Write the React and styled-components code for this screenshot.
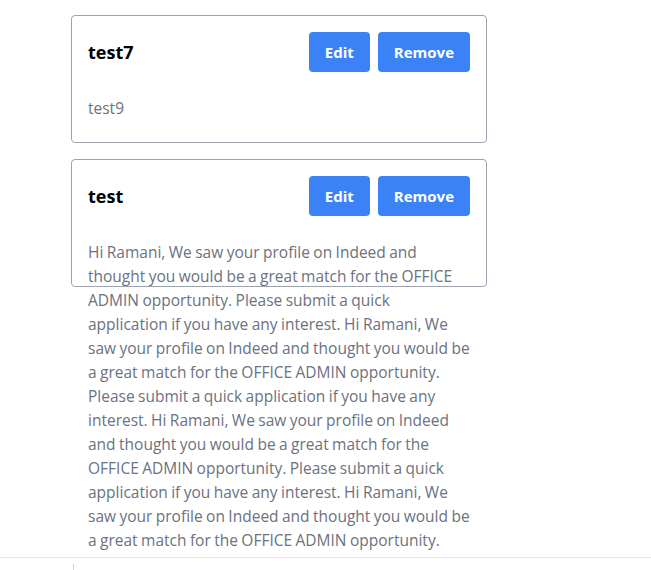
import React from 'react'
import styled, { createGlobalStyle } from 'styled-components'

const GlobalStyle = createGlobalStyle`
  html, body {
    margin: 0;
    padding: 0;
    background: #fff;
  }
  body {
    font-family: "Open Sans", "Noto Sans", sans-serif;
    height: 570px;
    overflow: hidden;
  }
  * { box-sizing: border-box; }
`

const notes = [
  { id: 1, title: 'test7', body: 'test9' },
  {
    id: 2,
    title: 'test',
    body: 'Hi Ramani, We saw your profile on Indeed and thought you would be a great match for the OFFICE ADMIN opportunity. Please submit a quick application if you have any interest. Hi Ramani, We saw your profile on Indeed and thought you would be a great match for the OFFICE ADMIN opportunity. Please submit a quick application if you have any interest. Hi Ramani, We saw your profile on Indeed and thought you would be a great match for the OFFICE ADMIN opportunity. Please submit a quick application if you have any interest. Hi Ramani, We saw your profile on Indeed and thought you would be a great match for the OFFICE ADMIN opportunity.',
  },
]

function NoteCard({ title, body }) {
  return (
    <Card>
      <Header>
        <Title>{title}</Title>
        <Actions>
          <Button>Edit</Button>
          <Button>Remove</Button>
        </Actions>
      </Header>
      <Body>{body}</Body>
    </Card>
  )
}

export default function App() {
  return (
    <Page>
      <GlobalStyle />
      <List>
        {notes.map(n => (
          <NoteCard key={n.id} title={n.title} body={n.body} />
        ))}
      </List>
      <Footer>
        <Tick />
      </Footer>
    </Page>
  )
}

const Page = styled.div`
  display: flex;
  flex-direction: column;
  height: 570px;
`
const List = styled.div`
  display: flex;
  flex-direction: column;
  gap: 16px;
  padding: 15px 0 0 71px;
  height: 558px;
`
const Card = styled.div`
  width: 416px;
  height: 128px;
  border: 1px solid #9ca3af;
  border-radius: 4px;
  padding: 16px;
  flex-shrink: 0;
`
const Header = styled.div`
  display: flex;
  align-items: center;
  justify-content: space-between;
  height: 40px;
`
const Title = styled.h2`
  margin: 0;
  font-size: 18px;
  font-weight: 700;
  color: #000;
`
const Actions = styled.div`
  display: flex;
  gap: 8px;
`
const Button = styled.button`
  height: 40px;
  padding: 0 16px;
  border: none;
  border-radius: 4px;
  background: #3b82f6;
  color: #fff;
  font-family: inherit;
  font-size: 15px;
  font-weight: 700;
`
const Body = styled.p`
  margin: 24px 0 0;
  font-size: 15.5px;
  line-height: 24px;
  word-spacing: -0.6px;
  color: #6b7280;
`
const Footer = styled.div`
  border-top: 1px solid #e5e7eb;
  flex: 1;
  padding: 6px 0 0 73px;
`
const Tick = styled.div`
  width: 1px;
  height: 6px;
  background: #d1d5db;
`
